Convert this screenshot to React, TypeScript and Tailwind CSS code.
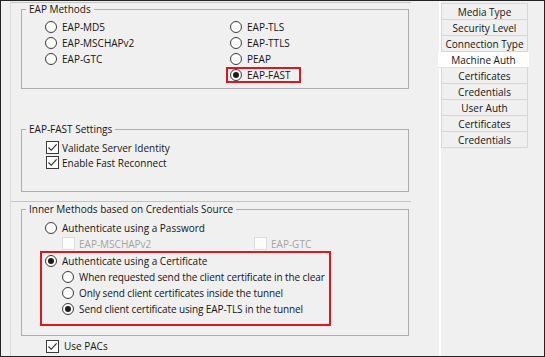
import React from "react";

const Radio = ({ checked = false }: { checked?: boolean }) => (
  <span className="w-[12px] h-[12px] rounded-full border border-[#3a3a3a] bg-[#fbfbfb] flex items-center justify-center shrink-0">
    {checked && <span className="w-[6px] h-[6px] rounded-full bg-[#1c1c1c]" />}
  </span>
);

const Check = ({ checked = false, disabled = false }: { checked?: boolean; disabled?: boolean }) => (
  <span
    className={
      disabled
        ? "w-[13px] h-[13px] border border-[#dcdcdc] bg-[#fcfcfc] flex items-center justify-center shrink-0"
        : "w-[13px] h-[13px] border border-[#3a3a3a] bg-[#fdfdfd] flex items-center justify-center shrink-0"
    }
  >
    {checked && (
      <svg width="11" height="11" viewBox="0 0 11 11">
        <path d="M1.5 5.5 L4.2 8.3 L9.6 2.3" fill="none" stroke="#222" strokeWidth="1.1" />
      </svg>
    )}
  </span>
);

const RadioRow = ({ label, checked = false, tight = false }: { label: string; checked?: boolean; tight?: boolean }) => (
  <div className="h-[16px] flex items-center gap-[5px] whitespace-nowrap">
    <Radio checked={checked} />
    <span className={tight ? "tracking-[-0.1px]" : ""}>{label}</span>
  </div>
);

const navItems = [
  "Media Type",
  "Security Level",
  "Connection Type",
  "Machine Auth",
  "Certificates",
  "Credentials",
  "User Auth",
  "Certificates",
  "Credentials",
];

export default function App() {
  return (
    <div className="w-[545px] h-[357px] border border-[#222] bg-[#f0f0f0] flex overflow-hidden font-['Open_Sans',sans-serif] text-[10px] leading-[16px] text-[#141414]">
      {/* Left content */}
      <div className="w-[438px] h-full pl-[9px] shrink-0">
        <div className="w-[401px] h-full border-l border-[#dadada] flex flex-col">
          {/* Panel 1 */}
          <div className="mt-[1px] h-[199px] border-t border-[#c4c4c4] pl-[10px] flex flex-col">
            <fieldset className="w-[388px] h-[86px] border border-[#acacac]">
              <legend className="ml-[4px] px-[3px] leading-[12px]">EAP Methods</legend>
              <div className="flex pl-[23px] pt-[4px]">
                <div className="w-[185px] flex flex-col">
                  <RadioRow label="EAP-MD5" />
                  <RadioRow label="EAP-MSCHAPv2" />
                  <RadioRow label="EAP-GTC" />
                </div>
                <div className="flex flex-col">
                  <RadioRow label="EAP-TLS" />
                  <RadioRow label="EAP-TTLS" />
                  <RadioRow label="PEAP" />
                  <div className="-ml-[4px] w-[75px] h-[16px] border-2 border-[#e0161f] pl-[2px] flex items-center gap-[5px] whitespace-nowrap">
                    <Radio checked />
                    <span>EAP-FAST</span>
                  </div>
                </div>
              </div>
            </fieldset>
            <fieldset className="mt-[34px] w-[388px] h-[69px] border border-[#acacac]">
              <legend className="ml-[4px] px-[3px] leading-[12px]">EAP-FAST Settings</legend>
              <div className="flex flex-col pl-[24px] pt-[5px]">
                <div className="h-[15px] flex items-center gap-[3px] whitespace-nowrap">
                  <Check checked />
                  <span>Validate Server Identity</span>
                </div>
                <div className="h-[15px] flex items-center gap-[3px] whitespace-nowrap">
                  <Check checked />
                  <span>Enable Fast Reconnect</span>
                </div>
              </div>
            </fieldset>
          </div>
          {/* Panel 2 */}
          <div className="flex-1 border-t border-[#c4c4c4] pl-[10px] flex flex-col">
            <fieldset className="mt-[1px] w-[388px] h-[133px] border border-[#acacac]">
              <legend className="ml-[4px] px-[3px] leading-[12px]">Inner Methods based on Credentials Source</legend>
              <div className="flex flex-col pl-[18px] pt-[5px]">
                <div className="pl-[5px]">
                  <RadioRow label="Authenticate using a Password" />
                </div>
                <div className="h-[15px] flex items-center pl-[22px] text-[#a3a3a3] whitespace-nowrap">
                  <div className="w-[192px] flex items-center gap-[4px]">
                    <Check disabled />
                    <span>EAP-MSCHAPv2</span>
                  </div>
                  <div className="flex items-center gap-[4px]">
                    <Check disabled />
                    <span>EAP-GTC</span>
                  </div>
                </div>
                <div className="w-[291px] border-2 border-[#e0161f] pl-[3px] pb-[7px] flex flex-col">
                  <RadioRow label="Authenticate using a Certificate" checked />
                  <div className="pl-[17px] flex flex-col">
                    <RadioRow label="When requested send the client certificate in the clear" tight />
                    <RadioRow label="Only send client certificates inside the tunnel" tight />
                    <RadioRow label="Send client certificate using EAP-TLS in the tunnel" checked tight />
                  </div>
                </div>
              </div>
            </fieldset>
            <div className="mt-[2px] ml-[25px] h-[16px] flex items-center gap-[5px] whitespace-nowrap">
              <Check checked />
              <span>Use PACs</span>
            </div>
          </div>
        </div>
      </div>
      {/* Splitter */}
      <div className="w-[2px] h-full bg-white shrink-0" />
      {/* Right nav */}
      <div className="flex-1 h-full pt-[2px]">
        <div className="w-[87px] flex flex-col border-t border-[#d6d6d6]">
          {navItems.map((item, i) =>
            i === 3 ? (
              <div
                key={i}
                className="-ml-[3px] w-[91px] h-[16px] bg-white border-b border-[#e4e4e4] flex items-center justify-center leading-[16px] whitespace-nowrap"
              >
                {item}
              </div>
            ) : (
              <div
                key={i}
                className="h-[16px] border-x border-b border-[#d6d6d6] flex items-center justify-center leading-[16px] whitespace-nowrap"
              >
                {item}
              </div>
            )
          )}
        </div>
      </div>
    </div>
  );
}
